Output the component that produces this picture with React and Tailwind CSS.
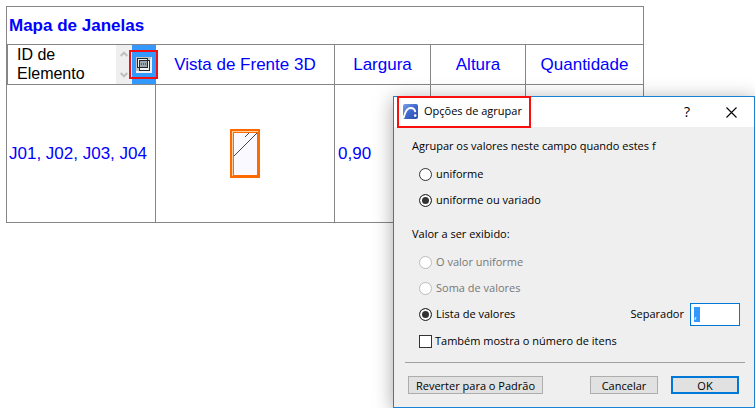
import { useEffect, useRef, useState } from 'react'

const columns = ['Vista de Frente 3D', 'Largura', 'Altura', 'Quantidade']

const ArrowIcon = ({ up }) => (
  <svg width="8" height="6" viewBox="0 0 8 6" fill="none" stroke="#bfbfbf" strokeWidth="2">
    <path d={up ? 'M0.7 5 L4 1.7 L7.3 5' : 'M0.7 1 L4 4.3 L7.3 1'} />
  </svg>
)

const GroupIcon = () => (
  <svg width="16" height="16" viewBox="0 0 16 16">
    <rect width="16" height="16" fill="#f4f2ee" />
    <path d="M0 0h15v2H14V14H0z" fill="#c9c6c1" />
    <rect x="3.5" y="3.5" width="10" height="10" fill="#f4f2ee" stroke="#1c2b33" />
    <rect x="1.5" y="1.5" width="10" height="9" fill="#f4f2ee" stroke="#1c2b33" />
    <rect x="3.5" y="3.5" width="8" height="7" fill="#9aa5ab" stroke="#1c2b33" />
    <path d="M5 6.5h1v1H5zM7 6.5h1v1H7zM9 6.5h1v1H9z" fill="#1c2b33" />
  </svg>
)

const WindowDrawing = () => (
  <svg width="30" height="49" viewBox="0 0 30 49" className="inline-block">
    <rect width="30" height="49" fill="#ff6a00" />
    <path d="M2 47V2h26v1H3v44z" fill="#ffd0a0" />
    <rect x="4" y="4" width="23" height="42" fill="#f9f9ff" />
    <path d="M4 27L27 4M15 8l4-4" stroke="#444" strokeWidth="1" fill="none" />
  </svg>
)

const AppIcon = () => (
  <svg width="15" height="15" viewBox="0 0 15 15">
    <defs>
      <linearGradient id="appBlue" x1="0" y1="0" x2="1" y2="1">
        <stop offset="0" stopColor="#7f9fe8" />
        <stop offset="0.5" stopColor="#3f68cc" />
        <stop offset="1" stopColor="#2c4ba8" />
      </linearGradient>
    </defs>
    <rect width="15" height="15" rx="2" fill="url(#appBlue)" />
    <path d="M0.5 14C2 8 4.5 4 7.5 4c3 0 4.5 1 4.8 4.2" fill="none" stroke="#fff" strokeWidth="1.8" />
    <circle cx="12.2" cy="11.6" r="1.3" fill="#fff" />
  </svg>
)

const Radio = ({ label, ...props }) => (
  <label className="flex h-[26px] items-center gap-1 text-black has-disabled:text-[#777]">
    <input
      type="radio"
      className="size-[13px] appearance-none rounded-full border border-[#333] bg-white checked:bg-[#333] checked:shadow-[inset_0_0_0_2px_white] disabled:border-[#bcbcbc]"
      {...props}
    />
    {label}
  </label>
)

const WindowTable = () => (
  <table className="w-full max-w-[638px] table-fixed border-collapse text-[17px] text-[#0000ff]">
    <colgroup>
      <col className="w-[149px]" />
      <col className="w-[179px]" />
      <col className="w-[96px]" />
      <col className="w-[95px]" />
      <col />
    </colgroup>
    <thead>
      <tr>
        <th colSpan={5} className="h-[38px] border border-[#868686] px-0.5 text-left font-bold">
          Mapa de Janelas
        </th>
      </tr>
      <tr>
        <th className="h-10 border border-[#868686] p-0 font-normal">
          <div className="flex h-[39px] border-l border-[#3399ff]">
            <textarea
              aria-label="Campo"
              readOnly
              rows={2}
              defaultValue={'ID de\nElemento'}
              className="w-0 grow resize-none overflow-hidden pl-[9px] text-base leading-[19px] text-black outline-none"
            />
            <div className="flex w-4 shrink-0 flex-col items-center justify-between bg-[#efefef] py-1.5">
              <button aria-label="Acima" className="flex"><ArrowIcon up /></button>
              <button aria-label="Abaixo" className="flex"><ArrowIcon /></button>
            </div>
            <div className="relative flex w-[23px] shrink-0 items-center justify-center bg-[#3399ff]">
              <button aria-label="Agrupar" className="flex"><GroupIcon /></button>
              <span className="pointer-events-none absolute -inset-x-[3px] inset-y-[5px] border-2 border-[#f00f14]" />
            </div>
          </div>
        </th>
        {columns.map(name => (
          <th key={name} className="border border-[#868686] p-0 font-normal">{name}</th>
        ))}
      </tr>
    </thead>
    <tbody>
      <tr>
        <td className="h-[138px] border border-[#868686] px-0.5 whitespace-nowrap">J01, J02, J03, J04</td>
        <td className="border border-[#868686] text-center"><WindowDrawing /></td>
        <td className="border border-[#868686] px-[3px]">0,90</td>
        <td className="border border-[#868686]" />
        <td className="border border-[#868686]" />
      </tr>
    </tbody>
  </table>
)

const GroupDialog = () => {
  const [condition, setCondition] = useState('varied')
  const [showCount, setShowCount] = useState(false)
  const separatorRef = useRef(null)

  useEffect(() => {
    separatorRef.current.focus()
    separatorRef.current.select()
  }, [])

  return (
    <div
      role="dialog"
      aria-labelledby="dialog-title"
      className="absolute top-24 right-0 w-[362px] border border-[#1a82d6] bg-[#efefef] font-['Open_Sans',sans-serif] text-[11px] text-black shadow-[0_3px_18px_rgba(0,0,0,0.35)]"
    >
      <div className="flex h-[30px] items-center bg-white pr-[17px]">
        <div className="-mt-px ml-[3px] flex h-8 items-center gap-1.5 border-2 border-[#fa0f0f] px-1 pr-[7px]">
          <AppIcon />
          <h2 id="dialog-title">Opções de agrupar</h2>
        </div>
        <button aria-label="Ajuda" className="ml-auto text-sm font-medium">?</button>
        <button aria-label="Fechar" className="ml-9">
          <svg width="11" height="11" viewBox="0 0 11 11" stroke="#000" strokeWidth="1.1">
            <path d="M0.5 0.5l10 10M10.5 0.5l-10 10" />
          </svg>
        </button>
      </div>

      <div className="px-[11px] pt-1.5 pb-[13px]">
        <fieldset className="pl-[7px]">
          <legend className="mb-0.5 flex h-[26px] items-center">Agrupar os valores neste campo quando estes f</legend>
          <div className="pl-[7px]">
            <Radio name="condition" label="uniforme" checked={condition === 'uniform'} onChange={() => setCondition('uniform')} />
            <Radio name="condition" label="uniforme ou variado" checked={condition === 'varied'} onChange={() => setCondition('varied')} />
          </div>
        </fieldset>

        <fieldset className="mt-2 pl-[7px]">
          <legend className="mb-0.5 flex h-[26px] items-center">Valor a ser exibido:</legend>
          <div className="pl-[7px]">
            <Radio name="display" label="O valor uniforme" disabled />
            <Radio name="display" label="Soma de valores" disabled />
            <div className="flex items-center justify-between pr-[3px]">
              <Radio name="display" label="Lista de valores" defaultChecked />
              <label className="flex items-center gap-1.5">
                Separador
                <input
                  ref={separatorRef}
                  type="text"
                  defaultValue=", "
                  className="h-[23px] w-[50px] border border-[#0078d7] bg-white px-[3px] outline-none selection:bg-[#3399ff] selection:text-white"
                />
              </label>
            </div>
            <label className="flex h-7 items-center gap-[3px]">
              <input
                type="checkbox"
                checked={showCount}
                onChange={e => setShowCount(e.target.checked)}
                className="size-[13px] appearance-none border border-[#333] bg-white checked:bg-[#333]"
              />
              Também mostra o número de itens
            </label>
          </div>
        </fieldset>

        <hr className="mt-[7px] -mr-0.5 border-[#a0a0a0]" />

        <div className="mt-[13px] flex gap-[13px] pr-1 pl-[3px] leading-none">
          <button className="mr-auto h-[18px] w-[135px] border border-[#adadad] bg-[#e1e1e1]">Reverter para o Padrão</button>
          <button className="h-[18px] w-[68px] border border-[#adadad] bg-[#e1e1e1]">Cancelar</button>
          <button className="h-[18px] w-[68px] border-2 border-[#0078d7] bg-[#e1e1e1]">OK</button>
        </div>
      </div>
    </div>
  )
}

const App = () => {
  return (
    <div className="relative min-h-screen overflow-hidden bg-white p-1.5 font-['Liberation_Sans',sans-serif]">
      <WindowTable />
      <GroupDialog />
    </div>
  )
}

export default App
